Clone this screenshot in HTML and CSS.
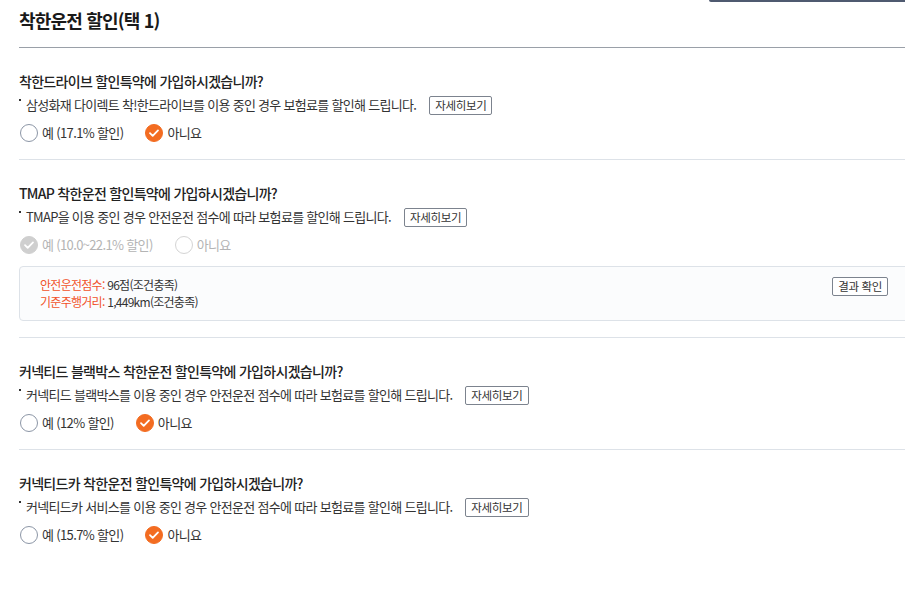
FILE: index.html
```html
<!DOCTYPE html>
<html lang="ko">
<head>
<meta charset="utf-8">
<link rel="stylesheet" href="styles.css">
</head>
<body>
<div class="page">
  <div class="topbar"><div class="topbar-tab"></div></div>
  <h1 class="title">착한운전 할인(택 1)</h1>

  <section class="item">
    <h2 class="q">착한드라이브 할인특약에 가입하시겠습니까?</h2>
    <p class="desc"><span class="desc-text">삼성화재 다이렉트 착!한드라이브를 이용 중인 경우 보험료를 할인해 드립니다.</span><button class="btn">자세히보기</button></p>
    <div class="radios">
      <label class="radio"><span class="circle"></span>예 (17.1% 할인)</label>
      <label class="radio on"><span class="circle"><svg viewBox="0 0 18 18"><path d="M5 9.2l2.7 2.7L13 6.4"/></svg></span>아니요</label>
    </div>
  </section>

  <section class="item">
    <h2 class="q">TMAP 착한운전 할인특약에 가입하시겠습니까?</h2>
    <p class="desc"><span class="desc-text">TMAP을 이용 중인 경우 안전운전 점수에 따라 보험료를 할인해 드립니다.</span><button class="btn">자세히보기</button></p>
    <div class="radios disabled">
      <label class="radio on"><span class="circle"><svg viewBox="0 0 18 18"><path d="M5 9.2l2.7 2.7L13 6.4"/></svg></span>예 (10.0~22.1% 할인)</label>
      <label class="radio"><span class="circle"></span>아니요</label>
    </div>
    <div class="infobox">
      <div class="info-lines">
        <div><span class="lbl">안전운전점수:</span> 96점(조건충족)</div>
        <div><span class="lbl">기준주행거리:</span> 1,449km(조건충족)</div>
      </div>
      <button class="btn">결과 확인</button>
    </div>
  </section>

  <section class="item">
    <h2 class="q">커넥티드 블랙박스 착한운전 할인특약에 가입하시겠습니까?</h2>
    <p class="desc"><span class="desc-text">커넥티드 블랙박스를 이용 중인 경우 안전운전 점수에 따라 보험료를 할인해 드립니다.</span><button class="btn">자세히보기</button></p>
    <div class="radios">
      <label class="radio"><span class="circle"></span>예 (12% 할인)</label>
      <label class="radio on"><span class="circle"><svg viewBox="0 0 18 18"><path d="M5 9.2l2.7 2.7L13 6.4"/></svg></span>아니요</label>
    </div>
  </section>

  <section class="item last">
    <h2 class="q">커넥티드카 착한운전 할인특약에 가입하시겠습니까?</h2>
    <p class="desc"><span class="desc-text">커넥티드카 서비스를 이용 중인 경우 안전운전 점수에 따라 보험료를 할인해 드립니다.</span><button class="btn">자세히보기</button></p>
    <div class="radios">
      <label class="radio"><span class="circle"></span>예 (15.7% 할인)</label>
      <label class="radio on"><span class="circle"><svg viewBox="0 0 18 18"><path d="M5 9.2l2.7 2.7L13 6.4"/></svg></span>아니요</label>
    </div>
  </section>
</div>
</body>
</html>
```

FILE: styles.css
```css
html, body {
  margin: 0;
  padding: 0;
  background: #fff;
  overflow: hidden;
}
body {
  font-family: "Noto Sans CJK KR", "Noto Sans", sans-serif;
  color: #222;
}
.page {
  margin-left: 19px;
  width: 900px;
}
.topbar {
  display: flex;
  justify-content: flex-end;
  height: 2px;
}
.topbar-tab {
  width: 210px;
  height: 2px;
  background: #4f5a70;
  border-bottom-left-radius: 3px;
}
.title {
  margin: 5px 0 0;
  font-size: 18px;
  line-height: 26px;
  font-weight: 700;
  letter-spacing: -0.045em;
  padding-bottom: 14px;
  border-bottom: 1px solid #9aa0a8;
  color: #1a1a1a;
}
.item {
  padding: 23px 0 16px;
  border-bottom: 1px solid #dde2e8;
}
.item.last {
  border-bottom: none;
}
.q {
  margin: 0;
  font-size: 14px;
  line-height: 20px;
  font-weight: 500;
  letter-spacing: -0.05em;
  color: #222;
}
.desc {
  margin: 4px 0 0;
  display: flex;
  align-items: center;
  font-size: 13px;
  line-height: 20px;
  letter-spacing: -0.054em;
  color: #333;
}
.desc-text {
  position: relative;
  padding-left: 7px;
}
.desc-text::before {
  content: "";
  position: absolute;
  left: 0;
  top: 4px;
  width: 2px;
  height: 2px;
  background: #333;
}
.btn {
  font-family: inherit;
  font-size: 11.5px;
  line-height: 17px;
  height: 19px;
  padding: 0 5px;
  margin: 0 0 0 13px;
  background: #fff;
  color: #333;
  border: 1px solid #7c838e;
  border-radius: 2px;
  letter-spacing: -0.03em;
}
.radios {
  display: flex;
  gap: 22px;
  margin-top: 8px;
  padding-left: 1px;
}
.radio {
  display: flex;
  align-items: center;
  gap: 4px;
  font-size: 13px;
  line-height: 20px;
  letter-spacing: -0.05em;
  color: #333;
}
.circle {
  width: 18px;
  height: 18px;
  box-sizing: border-box;
  border-radius: 50%;
  border: 1px solid #8c96a6;
  background: #fff;
  display: flex;
}
.circle svg {
  width: 18px;
  height: 18px;
  margin: -1px;
}
.circle path {
  fill: none;
  stroke: #fff;
  stroke-width: 1.8;
  stroke-linecap: round;
  stroke-linejoin: round;
}
.radio.on .circle {
  background: #f36c21;
  border-color: #f36c21;
}
.disabled .radio {
  color: #b4b4b4;
}
.disabled .circle {
  border-color: #d4d4d4;
}
.disabled .radio.on .circle {
  background: #cfcfcf;
  border-color: #cfcfcf;
}
.infobox {
  margin-top: 11px;
  display: flex;
  justify-content: space-between;
  align-items: flex-start;
  padding: 9px 30px 10px 20px;
  border: 1px solid #dde2e8;
  border-radius: 4px;
  background: #fbfcfd;
}
.info-lines {
  font-size: 12px;
  line-height: 17px;
  letter-spacing: -0.06em;
  color: #333;
}
.lbl {
  color: #f1532a;
}
.infobox .btn {
  margin-top: 1px;
}
```
